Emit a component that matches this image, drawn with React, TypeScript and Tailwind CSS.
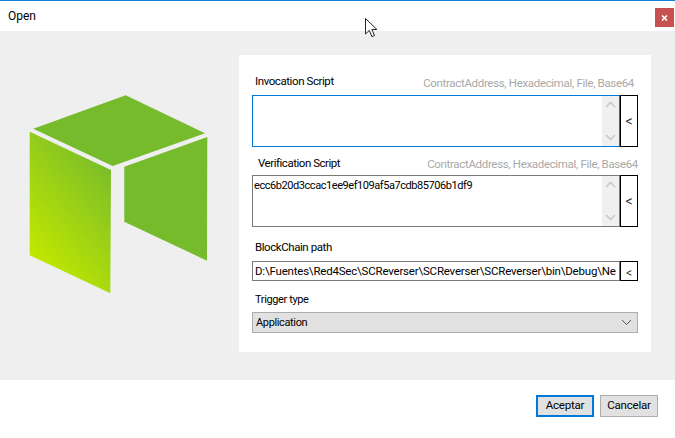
const ui = { fontFamily: 'Roboto, "Noto Sans", sans-serif' };

function Arrow({ up }: { up?: boolean }) {
  return (
    <svg width="17" height="17" viewBox="0 0 17 17" fill="none" stroke="#c8c8c8" strokeWidth="1.6">
      <path d={up ? "M4 11l4.5-4.5L13 11" : "M4 6l4.5 4.5L13 6"} />
    </svg>
  );
}

function ScriptRow({ focused, value }: { focused?: boolean; value?: string }) {
  return (
    <div className="flex h-[52px]">
      <div className={`flex-1 flex bg-white border ${focused ? "border-[#0078d7]" : "border-[#7a7a7a]"} pl-[1px]`}>
        <div className="flex-1 text-[11px] leading-[16px] pt-[2px] text-black tracking-[-0.44px]">{value}</div>
        <div className="w-[17px] bg-[#f0f0f0] flex flex-col justify-between">
          <Arrow up />
          <Arrow />
        </div>
      </div>
      <button className="w-[18px] bg-white border border-black text-[14px] leading-none text-[#333] flex items-center justify-center">&lt;</button>
    </div>
  );
}

function Label({ text, hint, h, cls, hintCls }: { text: string; hint?: string; h: string; cls: string; hintCls?: string }) {
  return (
    <div className={`flex justify-between items-end ${h}`}>
      <span className={`leading-[16px] text-black ${cls}`}>{text}</span>
      {hint && <span className={`text-[11.5px] leading-[16px] text-[#a9a9a9] tracking-[-0.33px] ${hintCls}`}>{hint}</span>}
    </div>
  );
}

export default function App() {
  return (
    <div className="relative w-[675px] h-[438px] bg-white flex flex-col overflow-hidden" style={ui}>
      <div className="h-[31px] border-t border-[#0f82d9] flex justify-between pl-[8px] pr-[1px]">
        <span className="text-[12px] leading-[16px] pt-[7px] text-black">Open</span>
        <div className="w-[19px] h-[19px] mt-[7px] bg-[#c75050] flex items-center justify-center">
          <svg width="7" height="6" viewBox="0 0 7 6" fill="none" stroke="#fff" strokeWidth="1.6">
            <path d="M1 .5l5 5M6 .5l-5 5" />
          </svg>
        </div>
      </div>

      <div className="h-[349px] bg-[#efefef] flex justify-between items-start pr-[24px]">
        <svg width="239" height="349" viewBox="0 31 239 349" className="shrink-0">
          <defs>
            <linearGradient id="g" gradientUnits="userSpaceOnUse" x1="30" y1="255" x2="125" y2="175">
              <stop offset="0" stopColor="#c2e800" />
              <stop offset="1" stopColor="#76bb2b" />
            </linearGradient>
          </defs>
          <polygon points="125.7,95.3 205,133.3 112.7,166 33.3,128.7" fill="#75bb2c" />
          <polygon points="29.7,131.7 111,170 110.3,293.3 29.7,255.3" fill="url(#g)" />
          <polygon points="124.3,166.7 207.3,137 207,260.7 124.3,221.7" fill="#75bb2c" />
        </svg>
        <div className="w-[412px] h-[297px] mt-[24px] bg-white px-[13px] flex flex-col">
          <Label text="Invocation Script" hint="ContractAddress, Hexadecimal, File, Base64" h="h-[40px]" cls="text-[11.5px] tracking-[-0.42px] ml-[3px] pb-[6px]" hintCls="mr-[4px] pb-[4px]" />
          <ScriptRow focused />
          <Label text="Verification Script" hint="ContractAddress, Hexadecimal, File, Base64" h="h-[28px]" cls="text-[11.5px] tracking-[-0.47px] ml-[6px] pb-[4px]" hintCls="pb-[3px]" />
          <ScriptRow value="ecc6b20d3ccac1ee9ef109af5a7cdb85706b1df9" />
          <Label text="BlockChain path" h="h-[34px]" cls="text-[11.5px] tracking-[-0.43px] ml-[3px] pb-[6px]" />
          <div className="flex h-[20px]">
            <div className="flex-1 min-w-0 bg-white border border-[#7a7a7a] pl-[2px] pr-[1px] text-[11.5px] leading-[18px] tracking-[-0.2px] text-black">
              <div className="overflow-hidden whitespace-nowrap h-[18px]">D:\Fuentes\Red4Sec\SCReverser\SCReverser\SCReverser\bin\Debug\Ne</div>
            </div>
            <button className="w-[18px] bg-white border border-black text-[12px] leading-none text-[#333] flex items-center justify-center pt-[3px]">&lt;</button>
          </div>
          <Label text="Trigger type" h="h-[31px]" cls="text-[11px] tracking-[-0.38px] ml-[3px] pb-[4px]" />
          <div className="h-[21px] bg-[#e1e1e1] border border-[#adadad] flex items-center justify-between pl-[3px] pr-[5px]">
            <span className="text-[11px] leading-[16px] tracking-[-0.36px] text-black">Application</span>
            <svg width="11" height="7" viewBox="0 0 11 7" fill="none" stroke="#555" strokeWidth="1">
              <path d="M1 1l4.5 4.5L10 1" />
            </svg>
          </div>
        </div>
      </div>

      <div className="flex-1 flex justify-end items-start gap-[6px] pt-[15px] pr-[17px]">
        <button className="w-[58px] h-[22px] bg-[#e1e1e1] border-2 border-[#0078d7] text-[11.5px] tracking-[-0.2px] leading-none text-black">Aceptar</button>
        <button className="w-[58px] h-[22px] bg-[#e1e1e1] border border-[#adadad] text-[11.5px] tracking-[-0.2px] leading-none text-black">Cancelar</button>
      </div>

      <svg className="absolute left-[365px] top-[18px]" width="14" height="20" viewBox="0 0 14 20">
        <path d="M.5.5v15.5l3.8-3.6 2.6 6.2 2.6-1.1-2.6-6h5z" fill="#fff" stroke="#222" strokeWidth="1" />
      </svg>
    </div>
  );
}
